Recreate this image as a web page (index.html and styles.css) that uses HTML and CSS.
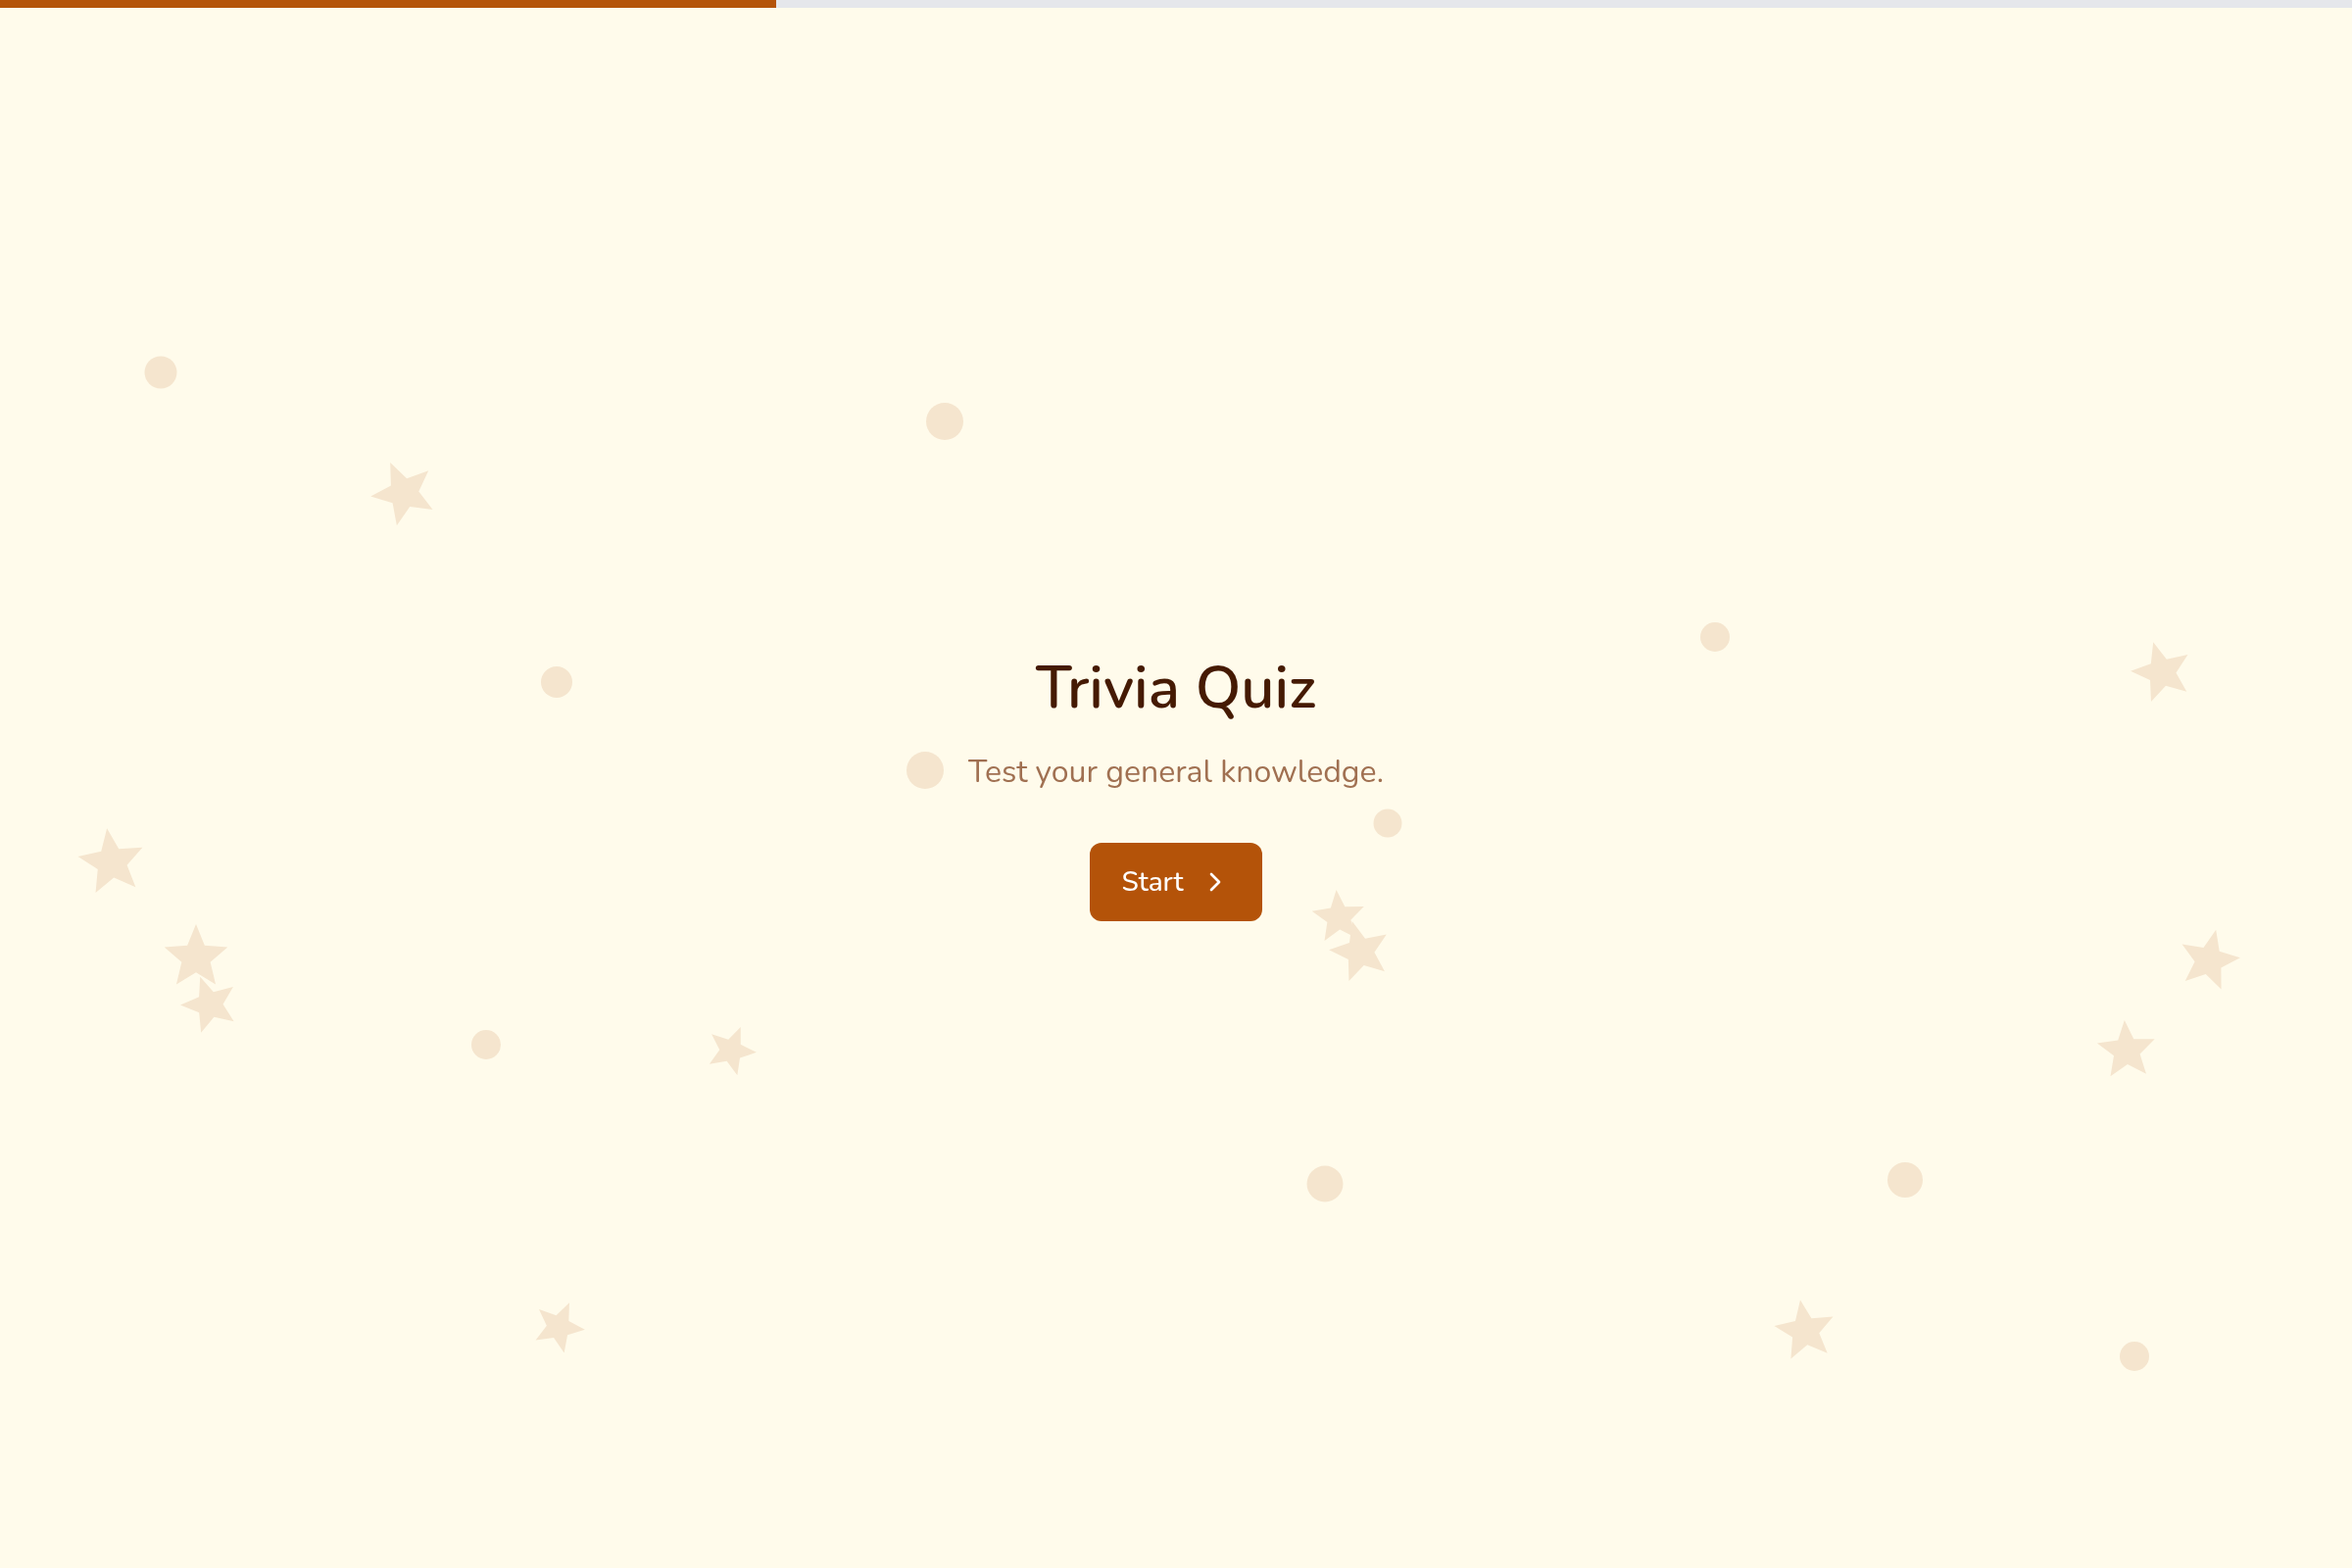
FILE: index.html
```html
<!DOCTYPE html>
<html lang="en">

<head>
    <meta charset="UTF-8">
    <meta name="viewport" content="width=device-width, initial-scale=1.0">
    <title>Trivia Quiz</title>
    <link rel="stylesheet" href="styles.css">
</head>

<body>
    <!-- Decorative confetti behind the content -->
    <svg class="confetti" viewBox="0 0 2400 1600" preserveAspectRatio="xMidYMid slice" aria-hidden="true">
        <defs>
            <polygon id="star" points="0,-100 26,-36 95,-31 43,14 59,81 0,45 -59,81 -43,14 -95,-31 -26,-36" />
        </defs>

        <circle cx="164" cy="380" r="16.5" />
        <circle cx="568" cy="696" r="16" />
        <circle cx="496" cy="1066" r="15" />
        <circle cx="964" cy="430" r="19" />
        <circle cx="944" cy="786" r="19" />
        <circle cx="1416" cy="840" r="14.5" />
        <circle cx="1352" cy="1208" r="18.5" />
        <circle cx="1750" cy="650" r="15" />
        <circle cx="1944" cy="1204" r="18" />
        <circle cx="2178" cy="1384" r="15" />

        <use href="#star" transform="translate(412 503) rotate(-24) scale(.34)" />
        <use href="#star" transform="translate(114 880) rotate(-8) scale(.35)" />
        <use href="#star" transform="translate(200 977) scale(.34)" />
        <use href="#star" transform="translate(214 1025) rotate(-19) scale(.3)" />
        <use href="#star" transform="translate(746 1072) rotate(22) scale(.26)" />
        <use href="#star" transform="translate(570 1354) rotate(24) scale(.27)" />
        <use href="#star" transform="translate(1366 936) rotate(-5) scale(.28)" />
        <use href="#star" transform="translate(1388 971) rotate(-15) scale(.32)" />
        <use href="#star" transform="translate(2206 686) rotate(-16) scale(.32)" />
        <use href="#star" transform="translate(2254 980) rotate(13) scale(.32)" />
        <use href="#star" transform="translate(2170 1072) rotate(-4) scale(.31)" />
        <use href="#star" transform="translate(1842 1358) rotate(-9) scale(.32)" />
    </svg>

    <div class="progress">
        <div class="progress-bar"></div>
    </div>

    <main class="welcome">
        <h1>Trivia Quiz</h1>
        <p class="description">Test your general knowledge.</p>
        <button type="button" class="start-btn">
            Start
            <svg class="icon" viewBox="0 0 24 24" aria-hidden="true">
                <path d="M9 18l6-6-6-6" />
            </svg>
        </button>
    </main>
</body>

</html>
```
FILE: styles.css
```css
* {
    margin: 0;
    padding: 0;
    box-sizing: border-box;
}

body {
    font-family: Nunito, Lato, "Open Sans", sans-serif;
    background-color: #fffbeb;
    color: #451a03;
}

/* Background shapes */
.confetti {
    position: fixed;
    inset: 0;
    width: 100%;
    height: 100%;
    fill: #f5e5ce;
    z-index: -1;
}

/* Progress bar, stays on top of the page */
.progress {
    position: fixed;
    top: 0;
    left: 0;
    width: 100%;
    height: 8px;
    background-color: #e5e7eb;
}

.progress-bar {
    width: 33%;
    height: 100%;
    background-color: #b45309;
}

/* Welcome screen */
.welcome {
    min-height: 100vh;
    display: flex;
    flex-direction: column;
    align-items: center;
    justify-content: center;
    padding: 32px;
    text-align: center;
}

h1 {
    font-size: 60px;
    font-weight: 600;
    line-height: 84px;
    margin-bottom: 20px;
}

.description {
    font-size: 32px;
    line-height: 48px;
    color: #a07051;
    margin-bottom: 48px;
}

.start-btn {
    display: inline-flex;
    align-items: center;
    gap: 16px;
    padding: 20px 32px;
    border: none;
    border-radius: 12px;
    background-color: #b45309;
    color: #fff;
    font-family: inherit;
    font-size: 28px;
    font-weight: 500;
    line-height: 40px;
    cursor: pointer;
}

.start-btn:hover {
    background-color: #92400e;
}

.icon {
    width: 32px;
    height: 32px;
    fill: none;
    stroke: currentColor;
    stroke-width: 2;
    stroke-linecap: round;
    stroke-linejoin: round;
}
```
